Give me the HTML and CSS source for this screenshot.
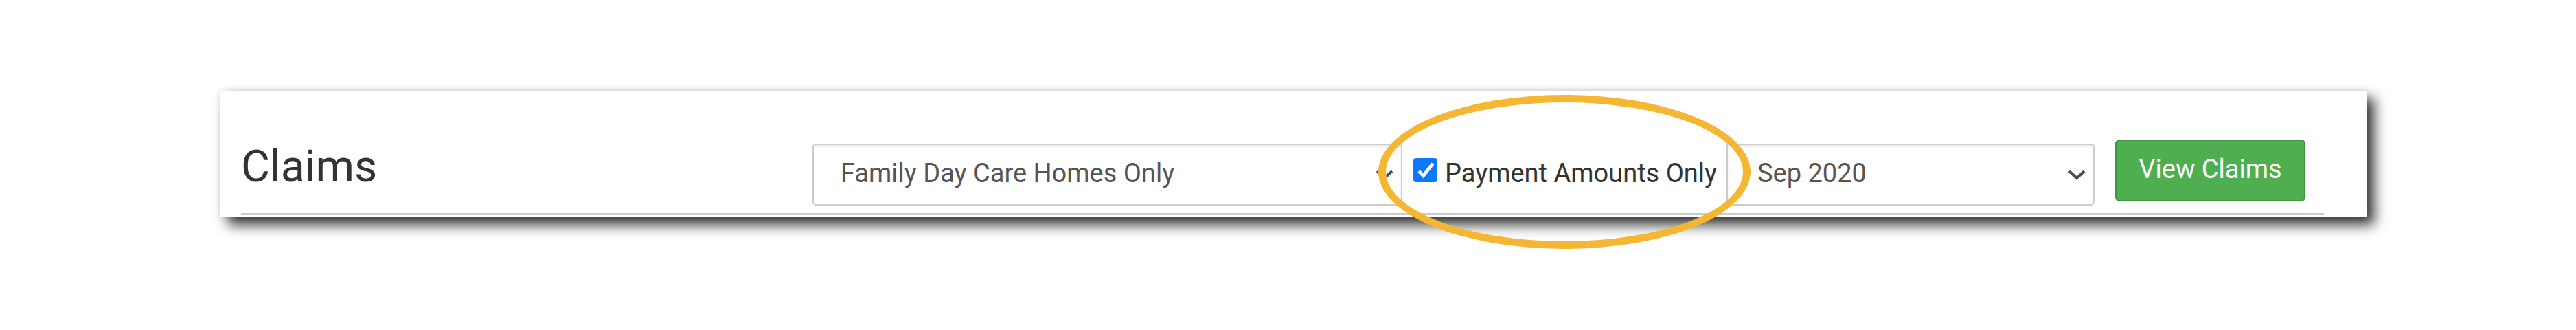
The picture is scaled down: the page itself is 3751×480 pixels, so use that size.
FILE: index.html
```html
<!DOCTYPE html>
<html lang="en">
<head>
<meta charset="utf-8">
<title>Claims</title>
<link rel="stylesheet" href="styles.css">
</head>
<body>
<div class="stage">
  <div class="card">
    <div class="card-header">
      <h2 class="title">Claims</h2>
      <div class="filters">
        <div class="select select-left">
          <span class="select-text">Family Day Care Homes Only</span>
          <svg class="chevron" width="26" height="16" viewBox="0 0 26 16"><polyline points="2,3 13,13 24,3" fill="none" stroke="#4a4a4a" stroke-width="4"/></svg>
        </div>
        <label class="check-label">
          <span class="check"><svg width="35" height="35" viewBox="0 0 35 35"><rect x="0" y="0" width="35" height="35" rx="4" fill="#0a78ff"/><polyline points="8,19 14.5,25.5 28.5,8" fill="none" stroke="#fff" stroke-width="5"/></svg></span>
          <span class="check-text">Payment Amounts Only</span>
        </label>
        <div class="select select-right">
          <span class="select-text">Sep 2020</span>
          <svg class="chevron" width="26" height="16" viewBox="0 0 26 16"><polyline points="2,3 13,13 24,3" fill="none" stroke="#4a4a4a" stroke-width="4"/></svg>
        </div>
        <button class="btn-view" type="button">View Claims</button>
      </div>
    </div>
  </div>
  <div class="highlight"></div>
</div>
</body>
</html>
```

FILE: styles.css
```css
html, body {
  margin: 0;
  padding: 0;
  background: #fff;
  width: 3751px;
  height: 480px;
  overflow: hidden;
}

body {
  font-family: Roboto, "Noto Sans", "Liberation Sans", sans-serif;
}

.stage {
  position: relative;
  width: 3751px;
  height: 480px;
  box-sizing: border-box;
  padding: 132px 0 0 321px;
}

.card {
  width: 3125px;
  box-sizing: border-box;
  background: #fff;
  border-top: 1px solid #d2d2d2;
  padding: 0 62px 3px 30px;
  box-shadow: 11px 11px 18px rgba(0, 0, 0, 0.8), 0 0 9px rgba(0, 0, 0, 0.1);
}

.card-header {
  display: flex;
  align-items: flex-end;
  height: 180px;
  box-sizing: border-box;
  border-bottom: 3px solid #cccccc;
  padding: 0 27px 11px 0;
}

.title {
  flex: 1;
  margin: 0 0 22px;
  font-size: 64.5px;
  font-weight: 400;
  line-height: 70px;
  color: #333;
}

.filters {
  display: flex;
  align-items: flex-end;
}

.select {
  display: flex;
  align-items: center;
  justify-content: space-between;
  height: 90px;
  box-sizing: border-box;
  border: 2px solid #cccccc;
  background: #fff;
  box-shadow: inset 0 3px 3px rgba(0, 0, 0, 0.075);
  padding: 0 11px 5px 39px;
  font-size: 38px;
  color: #555;
}

.select-left {
  width: 859px;
  border-radius: 5px 0 0 5px;
}

.select-right {
  width: 536px;
  border-radius: 0 5px 5px 0;
  padding-left: 43px;
}

.select-text {
  white-space: nowrap;
}

.chevron {
  display: block;
  margin-top: 5px;
}

.check-label {
  display: flex;
  align-items: center;
  width: 472px;
  height: 90px;
  box-sizing: border-box;
  padding: 0 16px 5px 16px;
  font-size: 38px;
  color: #333;
  white-space: nowrap;
}

.check {
  display: block;
  width: 35px;
  height: 35px;
  margin: 0 11px 8px 0;
}

.check svg {
  display: block;
}

.btn-view {
  width: 277px;
  height: 90px;
  box-sizing: border-box;
  margin: 0 0 6px 30px;
  padding: 0 0 4px;
  border: 2px solid #3f923f;
  border-radius: 6px;
  background: #4fae50;
  color: #fff;
  font-family: Roboto, "Noto Sans", "Liberation Sans", sans-serif;
  font-size: 38px;
  white-space: nowrap;
}

.highlight {
  position: absolute;
  left: 2007px;
  top: 138px;
  width: 542px;
  height: 224px;
  box-sizing: border-box;
  border: 11px solid #f5b733;
  border-radius: 50%;
}
```
